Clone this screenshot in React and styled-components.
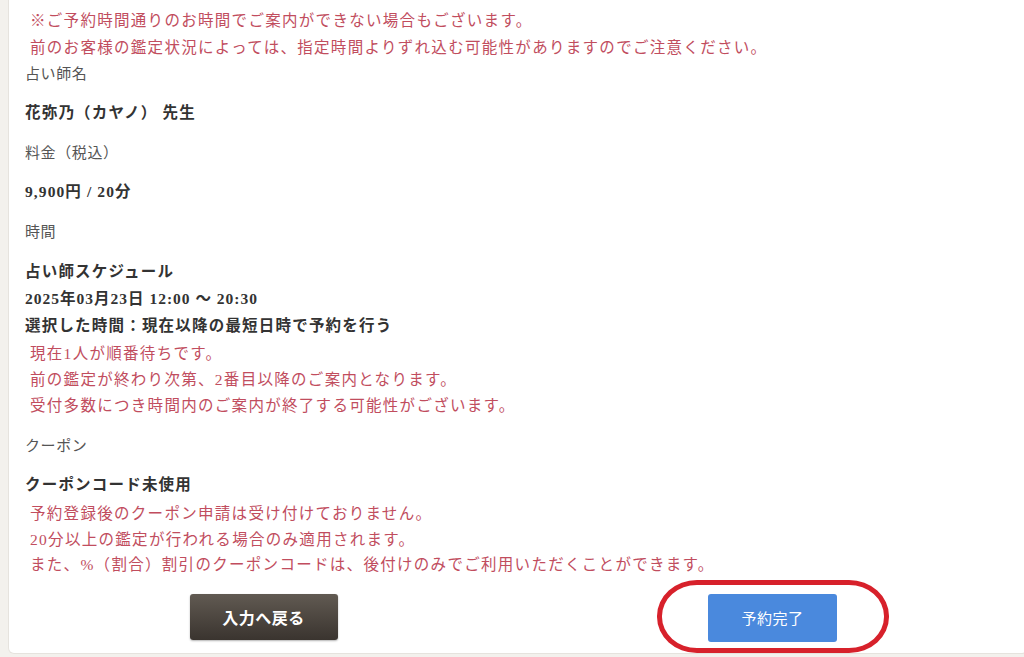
import React from 'react';
import styled, { createGlobalStyle } from 'styled-components';

const GlobalStyle = createGlobalStyle`
  html, body {
    margin: 0;
    padding: 0;
    background: #f3f1ed;
    overflow: hidden;
  }
  body {
    font-family: "Liberation Serif", "Noto Sans CJK JP", serif;
  }
`;

const Card = styled.div`
  margin-left: 8px;
  width: 1020px;
  height: 654px;
  box-sizing: border-box;
  background: #ffffff;
  border: 1px solid #e6e3de;
  border-top: none;
  border-radius: 0 0 6px 6px;
  padding: 7px 0 0 16px;
`;

const Notes = styled.div`
  padding-left: ${(p) => p.$indent || 5}px;
  margin-top: ${(p) => p.$top || 0}px;
  color: #c14d5e;
  font-size: 15.5px;
  line-height: ${(p) => p.$lh || 26}px;
  letter-spacing: 1.3px;
`;

const Label = styled.div`
  margin-top: ${(p) => p.$top ?? 14}px;
  color: #555555;
  font-size: 15px;
  line-height: 27px;
  letter-spacing: 0.6px;
`;

const Value = styled.div`
  margin-top: ${(p) => p.$top ?? 11}px;
  color: #333333;
  font-size: 15.5px;
  font-weight: 700;
  line-height: 27px;
  letter-spacing: ${(p) => p.$spacing ?? 1.2}px;
`;

const ButtonRow = styled.div`
  display: grid;
  grid-template-columns: 1fr 1fr;
  margin: 16px 0 0 -16px;
  justify-items: center;
  align-items: start;
`;

const BackButton = styled.button`
  width: 148px;
  height: 46px;
  border: none;
  border-radius: 3px;
  background: linear-gradient(#615a52, #3a342f);
  box-shadow: 0 1px 2px rgba(0, 0, 0, 0.3);
  color: #ffffff;
  font-family: inherit;
  font-size: 16px;
  font-weight: 700;
  letter-spacing: 0.5px;
`;

const SubmitWrap = styled.div`
  position: relative;
`;

const SubmitButton = styled.button`
  width: 129px;
  height: 48px;
  border: none;
  border-radius: 3px;
  background: #4a89dd;
  color: #ffffff;
  font-family: inherit;
  font-size: 15px;
  letter-spacing: 0.5px;
`;

const Ring = styled.div`
  position: absolute;
  left: -51px;
  right: -52px;
  top: -14px;
  bottom: -11px;
  border: 5px solid #d7212b;
  border-radius: 40px / 36px;
  pointer-events: none;
`;

export default function App() {
  return (
    <>
      <GlobalStyle />
      <Card>
        <Notes $indent={5} $lh={27}>
          <div>※ご予約時間通りのお時間でご案内ができない場合もございます。</div>
          <div>前のお客様の鑑定状況によっては、指定時間よりずれ込む可能性がありますのでご注意ください。</div>
        </Notes>
        <Label $top={0}>占い師名</Label>
        <Value>花弥乃（カヤノ） 先生</Value>
        <Label>料金（税込）</Label>
        <Value $spacing={1.1}>9,900円 / 20分</Value>
        <Label>時間</Label>
        <Value $top={12}>占い師スケジュール</Value>
        <Value $top={0} $spacing={1.0}>2025年03月23日 12:00 ～ 20:30</Value>
        <Value $top={0}>選択した時間：現在以降の最短日時で予約を行う</Value>
        <Notes $top={2}>
          <div>現在1人が順番待ちです。</div>
          <div>前の鑑定が終わり次第、2番目以降のご案内となります。</div>
          <div>受付多数につき時間内のご案内が終了する可能性がございます。</div>
        </Notes>
        <Label>クーポン</Label>
        <Value>クーポンコード未使用</Value>
        <Notes $top={3} $lh={25.5}>
          <div>予約登録後のクーポン申請は受け付けておりません。</div>
          <div>20分以上の鑑定が行われる場合のみ適用されます。</div>
          <div>また、%（割合）割引のクーポンコードは、後付けのみでご利用いただくことができます。</div>
        </Notes>
        <ButtonRow>
          <BackButton>入力へ戻る</BackButton>
          <SubmitWrap>
            <SubmitButton>予約完了</SubmitButton>
            <Ring />
          </SubmitWrap>
        </ButtonRow>
      </Card>
    </>
  );
}
